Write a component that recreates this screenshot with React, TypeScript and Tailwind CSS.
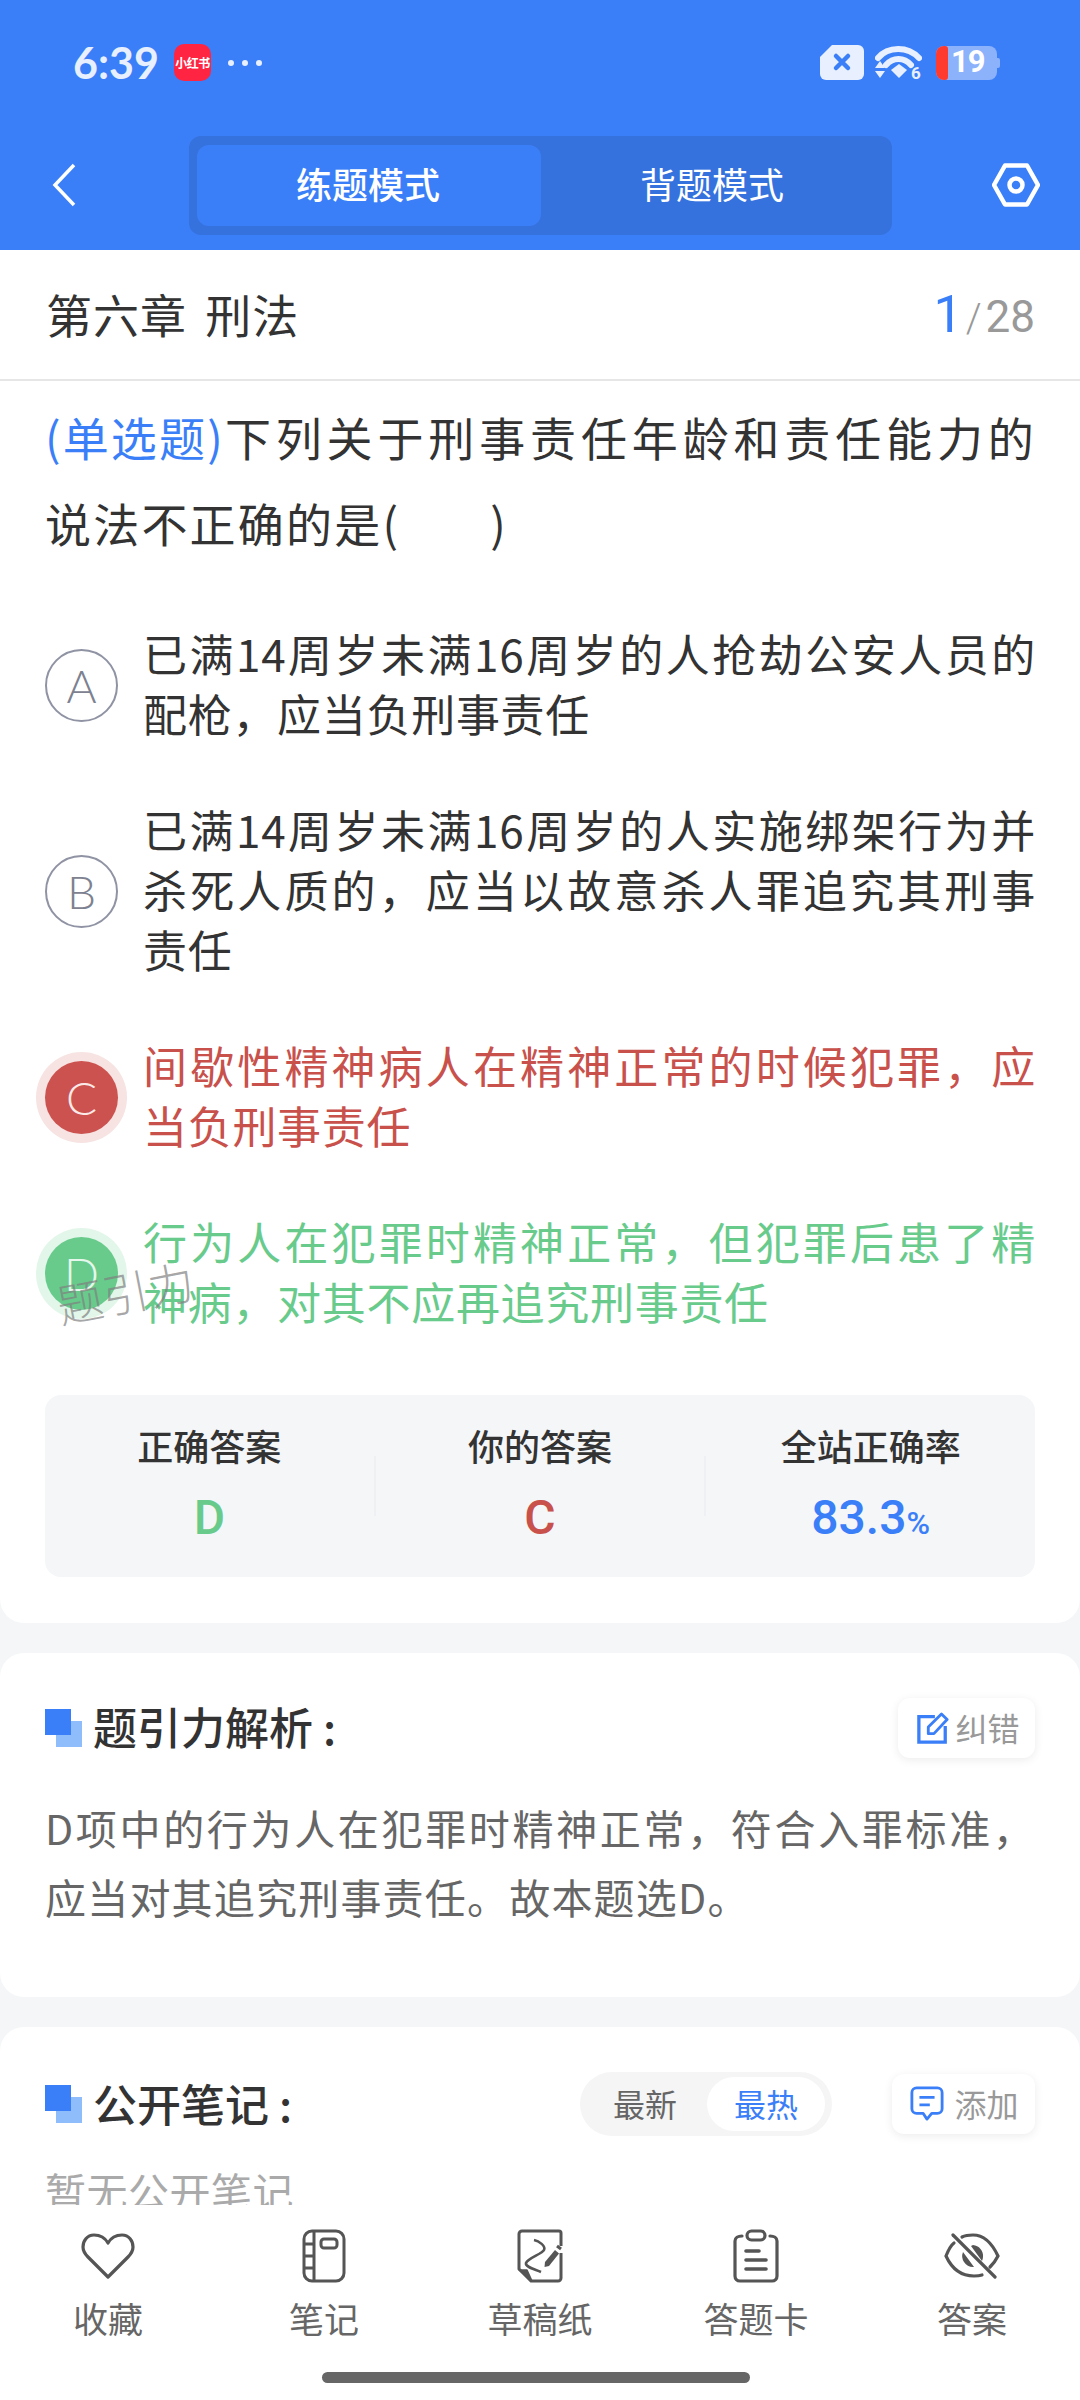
import React from 'react';

const BLUE = '#3b7ff8';

function SquareMark() {
  return (
    <span className="relative block w-[37px] h-[38px] shrink-0">
      <span className="absolute right-0 bottom-0 w-[26px] h-[26px] bg-[#8fbcfb]" />
      <span className="absolute left-0 top-0 w-[26px] h-[26px] bg-[#3b7ff8]" />
    </span>
  );
}

function Option({ letter, lines, tone }: { letter: string; lines: string[]; tone?: 'red' | 'green' }) {
  const circle =
    tone === 'red'
      ? 'bg-[#cb524e] text-[#fbe9e8] shadow-[0_0_0_9px_#f6e3e2]'
      : tone === 'green'
        ? 'bg-[#68cb8c] text-[#e6f7ec] shadow-[0_0_0_9px_#e3f6ea]'
        : 'border-2 border-[#8f93a3] text-[#7d8190]';
  const text = tone === 'red' ? 'text-[#c9514c]' : tone === 'green' ? 'text-[#68cb8c]' : 'text-[#333333]';
  return (
    <div className="flex items-center">
      <div className={`w-[73px] h-[73px] rounded-full shrink-0 flex items-center justify-center text-[46px] font-['Lato',sans-serif] font-light ${circle}`}>
        {letter}
      </div>
      <div className={`ml-[25px] -translate-y-[2px] w-[893px] text-[44px] leading-[60px] tracking-[0.7px] ${text}`}>
        {lines.map((l, i) => (
          <div key={l} className={i < lines.length - 1 ? 'whitespace-nowrap [text-align-last:justify]' : 'whitespace-nowrap'}>
            {l}
          </div>
        ))}
      </div>
    </div>
  );
}

function Stat({ label, children }: { label: string; children: React.ReactNode }) {
  return (
    <div className="flex-1 flex flex-col items-center pt-[28px]">
      <div className="text-[36px] leading-[44px] font-medium text-[#333333]">{label}</div>
      <div className="mt-[15px] h-[50px] flex items-baseline font-['Roboto',sans-serif] font-medium">{children}</div>
    </div>
  );
}

function NavItem({ label, children }: { label: string; children: React.ReactNode }) {
  return (
    <div className="flex flex-col items-center">
      <div className="h-[52px] flex items-center justify-center">{children}</div>
      <div className="mt-[15px] text-[35px] leading-[42px] text-[#666666]">{label}</div>
    </div>
  );
}

export default function App() {
  return (
    <div className="w-[1080px] h-[2400px] flex flex-col overflow-hidden bg-[#f5f6f8] font-['Noto_Sans_CJK_SC',sans-serif]">
      {/* Header */}
      <div className="h-[250px] shrink-0 bg-[#3b7ff8]">
        <div className="h-[125px] flex items-center justify-between pl-[73px] pr-[80px]">
          <div className="flex items-center">
            <span className="text-[43px] leading-none font-bold text-[#e8f0ff] font-['Lato',sans-serif] w-[101px]">6:39</span>
            <span className="w-[37px] h-[37px] rounded-[10px] bg-[#ff2442] flex items-center justify-center text-[12px] font-bold tracking-[-0.5px] text-white whitespace-nowrap">小红书</span>
            <span className="ml-[17px] flex gap-[8px]">
              <i className="block w-[6px] h-[6px] rounded-full bg-[#e8f0ff]" />
              <i className="block w-[6px] h-[6px] rounded-full bg-[#e8f0ff]" />
              <i className="block w-[6px] h-[6px] rounded-full bg-[#e8f0ff]" />
            </span>
          </div>
          <div className="flex items-center">
            <svg width="44" height="35" viewBox="0 0 44 35">
              <path d="M12 0H38a6 6 0 0 1 6 6V29a6 6 0 0 1-6 6H6a6 6 0 0 1-6-6V12Z" fill="#e8f0ff" />
              <path d="M16 11L28 23M28 11L16 23" stroke="#3b7ff8" strokeWidth="4.5" strokeLinecap="round" />
            </svg>
            <svg className="ml-[11px]" width="47" height="34" viewBox="0 0 47 34" fill="none">
              <path d="M3 12C13 0 33 0 44 12" stroke="#e8f0ff" strokeWidth="6" strokeLinecap="round" />
              <path d="M11 19C18 11 29 11 36 19" stroke="#e8f0ff" strokeWidth="6" strokeLinecap="round" />
              <path d="M16 24L24 18L32 24L24 32Z" fill="#e8f0ff" />
              <path d="M5 14L10 21H0ZM0 24H10L5 31Z" fill="#e8f0ff" transform="translate(0 1)" />
              <text x="36" y="33" fill="#e8f0ff" fontSize="17" fontWeight="700" fontFamily="Roboto">6</text>
            </svg>
            <div className="ml-[14px] relative w-[64px] h-[34px]">
              <div className="absolute left-0 top-0 w-[61px] h-[34px] rounded-[8px] bg-[#8cb2fb]" />
              <div className="absolute right-0 top-[12px] w-[4px] h-[10px] rounded-r-[2px] bg-[#8cb2fb]" />
              <div className="absolute left-0 top-0 w-[12px] h-[34px] rounded-l-[8px] rounded-r-[3px] bg-[#ff3b30]" />
              <div className="absolute left-[15px] top-0 h-[34px] flex items-center text-[31px] tracking-[-1px] font-bold text-white font-['Roboto',sans-serif]">19</div>
            </div>
          </div>
        </div>
        <div className="flex items-start pt-[11px]">
          <div className="w-[189px] pl-[52px] pt-[27px]">
            <svg width="24" height="44" viewBox="0 0 24 44" fill="none">
              <path d="M22 2L3 22L22 42" stroke="white" strokeWidth="3.5" />
            </svg>
          </div>
          <div className="w-[703px] h-[99px] rounded-[12px] bg-[#3672dd] flex pl-[8px] pt-[9px]">
            <div className="w-[344px] h-[81px] pb-[5px] pr-[2px] rounded-[12px] bg-[#3b7ff8] flex items-center justify-center text-[36px] font-medium text-white">练题模式</div>
            <div className="w-[344px] h-[81px] pb-[5px] pr-[2px] flex items-center justify-center text-[36px] text-white">背题模式</div>
          </div>
          <div className="ml-[100px] pt-[27px]">
            <svg width="48" height="44" viewBox="0 0 48 44" fill="none">
              <path d="M13 2.5H35L46 22L35 41.5H13L2 22Z" stroke="white" strokeWidth="4.5" strokeLinejoin="round" />
              <circle cx="24" cy="22" r="6.5" stroke="white" strokeWidth="4.5" />
            </svg>
          </div>
        </div>
      </div>

      {/* Scroll area */}
      <div className="flex-1 min-h-0 overflow-hidden">
        <div className="bg-white rounded-b-[24px] h-[1373px] relative">
          <div className="h-[131px] pb-[3px] border-b-2 border-[#e6e6e6] flex items-center justify-between pl-[46px] pr-[45px]">
            <span className="text-[46px] tracking-[1px] text-[#333333] [word-spacing:7px]">第六章 刑法</span>
            <span className="flex items-baseline translate-y-[2px] font-['Roboto',sans-serif]">
              <span className="text-[52px] text-[#3b7ff8]">1</span>
              <span className="text-[40px] text-[#999999] ml-[3px] font-light">/</span>
              <span className="text-[44px] text-[#999999] ml-[4px]">28</span>
            </span>
          </div>
          <div className="pl-[45px] pt-[12px] w-[1036px] text-[46px] leading-[86px] tracking-[2.2px] text-[#333333] whitespace-nowrap">
            <div className="[text-align-last:justify]"><span className="text-[#3b7ff8] tracking-[-0.5px]">(单选题)</span>下列关于刑事责任年龄和责任能力的</div>
            <div>说法不正确的是(<span className="inline-block w-[90px]" />)</div>
          </div>
          <div className="mt-[60px] pl-[45px] flex flex-col gap-[56px]">
            <Option letter="A" lines={['已满14周岁未满16周岁的人抢劫公安人员的', '配枪，应当负刑事责任']} />
            <Option letter="B" lines={['已满14周岁未满16周岁的人实施绑架行为并', '杀死人质的，应当以故意杀人罪追究其刑事', '责任']} />
            <Option letter="C" lines={['间歇性精神病人在精神正常的时候犯罪，应', '当负刑事责任']} tone="red" />
            <Option letter="D" lines={['行为人在犯罪时精神正常，但犯罪后患了精', '神病，对其不应再追究刑事责任']} tone="green" />
          </div>
          {/* watermark */}
          <div className="absolute left-[56px] top-[1018px] -rotate-[11deg] text-[46px] font-light leading-none text-[#7f7f7f]/70 whitespace-nowrap">题引力</div>
          <div className="mt-[62px] mx-[45px] h-[182px] rounded-[16px] bg-[#f5f6f8] flex relative">
            <Stat label="正确答案">
              <span className="text-[48px] text-[#68cb8c]">D</span>
            </Stat>
            <div className="w-[2px] h-[60px] mt-[61px] bg-[#eef0f3]" />
            <Stat label="你的答案">
              <span className="text-[48px] text-[#c9514c]">C</span>
            </Stat>
            <div className="w-[2px] h-[60px] mt-[61px] bg-[#eef0f3]" />
            <Stat label="全站正确率">
              <span className="text-[48px] text-[#3b7ff8]">83.3</span>
              <span className="text-[32px] text-[#3b7ff8]">%</span>
            </Stat>
          </div>
        </div>

        {/* Analysis */}
        <div className="mt-[30px] bg-white rounded-[24px] h-[344px] pt-[45px] pl-[45px] pr-[45px]">
          <div className="flex items-center h-[60px]">
            <SquareMark />
            <span className="ml-[11px] mb-[5px] text-[44px] font-medium text-[#333333]">题引力解析<span className="ml-[10px]">:</span></span>
            <div className="ml-auto w-[137px] h-[60px] rounded-[12px] bg-white shadow-[0_2px_10px_rgba(0,0,0,0.08)] flex items-center justify-center gap-[6px] pl-[4px]">
              <svg width="32" height="32" viewBox="0 0 34 34" fill="none">
                <path d="M19 5H2V32H30V15" stroke={BLUE} strokeWidth="3.5" />
                <path d="M12 23V16L26 2L32 8L18 23Z" stroke={BLUE} strokeWidth="3" strokeLinejoin="round" />
              </svg>
              <span className="text-[32px] mb-[3px] text-[#999999]">纠错</span>
            </div>
          </div>
          <div className="mt-[35px] w-[990px] text-[41px] leading-[69px] tracking-[1.2px] text-[#666666] whitespace-nowrap">
            <div className="[text-align-last:justify]">D项中的行为人在犯罪时精神正常，符合入罪标准，</div>
            <div>应当对其追究刑事责任。故本题选D。</div>
          </div>
        </div>

        {/* Notes */}
        <div className="mt-[30px] bg-white rounded-t-[24px] h-[300px] pt-[45px] pl-[45px] pr-[45px]">
          <div className="flex items-center h-[64px]">
            <SquareMark />
            <span className="ml-[11px] mb-[3px] text-[44px] font-medium text-[#333333]">公开笔记<span className="ml-[10px]">:</span></span>
            <div className="ml-auto w-[252px] h-[64px] rounded-full bg-[#f5f5f5] flex items-center pl-[33px] pr-[7px]">
              <span className="text-[32px] mb-[3px] text-[#666666]">最新</span>
              <span className="ml-auto w-[118px] h-[54px] pb-[3px] rounded-full bg-white flex items-center justify-center text-[32px] text-[#3b7ff8]">最热</span>
            </div>
            <div className="ml-[60px] w-[143px] h-[60px] rounded-[12px] bg-white shadow-[0_2px_10px_rgba(0,0,0,0.08)] flex items-center justify-center gap-[10px] pl-[2px]">
              <svg width="34" height="36" viewBox="0 0 36 38" fill="none">
                <path d="M7 2H29a5 5 0 0 1 5 5V24a5 5 0 0 1-5 5H23L18 35L14 29H7a5 5 0 0 1-5-5V7a5 5 0 0 1 5-5Z" stroke={BLUE} strokeWidth="3" strokeLinejoin="round" />
                <path d="M10 12H26M10 20H21" stroke={BLUE} strokeWidth="3" />
              </svg>
              <span className="text-[32px] mb-[3px] text-[#999999]">添加</span>
            </div>
          </div>
          <div className="mt-[29px] text-[41px] leading-[50px] tracking-[0.5px] text-[#aaaaaa]">暂无公开笔记</div>
        </div>
      </div>

      {/* Bottom nav */}
      <div className="h-[195px] shrink-0 bg-white pt-[25px] flex flex-col relative">
        <div className="grid grid-cols-5">
          <NavItem label="收藏">
            <svg width="54" height="46" viewBox="0 0 54 46" fill="none">
              <path d="M27 10C23 3 17 2 13 2C6 2 2 8 2 14C2 18 4 21 7 24L27 44L47 24C50 21 52 18 52 14C52 8 48 2 41 2C37 2 31 3 27 10Z" stroke="#555555" strokeWidth="3.2" strokeLinejoin="round" />
            </svg>
          </NavItem>
          <NavItem label="笔记">
            <svg width="44" height="54" viewBox="0 0 44 54" fill="none" stroke="#555555" strokeWidth="3">
              <rect x="2" y="2" width="40" height="50" rx="8" />
              <path d="M12 2V52M2 15H12M2 27H12M2 39H12" />
              <rect x="19" y="10" width="16" height="9" rx="3" />
            </svg>
          </NavItem>
          <NavItem label="草稿纸">
            <svg width="46" height="54" viewBox="0 0 46 54" fill="none" stroke="#555555" strokeWidth="3">
              <path d="M44 17V4a2 2 0 0 0-2-2H5a3 3 0 0 0-3 3V40L14 52H41a3 3 0 0 0 3-3V24" />
              <path d="M2 41H10L15 52Z" fill="#555555" stroke="#555555" strokeWidth="1.5" strokeLinejoin="round" />
              <path d="M17 11C22 12 29 17 27 21C25 25 11 29 9 34C8 38 17 40 24 43" strokeWidth="2.6" />
              <path d="M28 33L38 21L42 24.500L32 37L27.500 38Z" fill="#555555" stroke="none" />
              <path d="M40 17L44 20" strokeWidth="3" />
            </svg>
          </NavItem>
          <NavItem label="答题卡">
            <svg width="46" height="54" viewBox="0 0 46 54" fill="none" stroke="#555555" strokeWidth="3.2" strokeLinecap="round">
              <path d="M9 7C5 7 2 9 2 12V47C2 50 4 52 7 52H39C42 52 44 50 44 47V12C44 9 41 7 37 7" />
              <rect x="14" y="2" width="18" height="9" rx="4.500" />
              <path d="M13 22H26M13 31H33M13 40H33" strokeWidth="3.6" />
            </svg>
          </NavItem>
          <NavItem label="答案">
            <svg width="56" height="46" viewBox="0 0 56 46" fill="none" stroke="#555555" strokeWidth="3.2" strokeLinecap="round">
              <path d="M9 2L51 44" />
              <path d="M18 4C22 2 26 2 29 2C38 2 47 8 54 23C52 27 50 30 46 34" />
              <path d="M10 10C6 13 4 18 2 23C8 36 18 43 30 43C32 43 35 43 38 42" />
              <path d="M29 12A11 11 0 0 1 39 24A11 11 0 0 1 38 28L27 13Z" fill="#555555" stroke="none" />
              <path d="M19 19A11 11 0 0 0 20 29A11 11 0 0 0 30 34Z" fill="#555555" stroke="none" />
            </svg>
          </NavItem>
        </div>
        <div className="mt-[33px] ml-[322px] w-[428px] h-[11px] rounded-full bg-[#666666]" />
      </div>
    </div>
  );
}
